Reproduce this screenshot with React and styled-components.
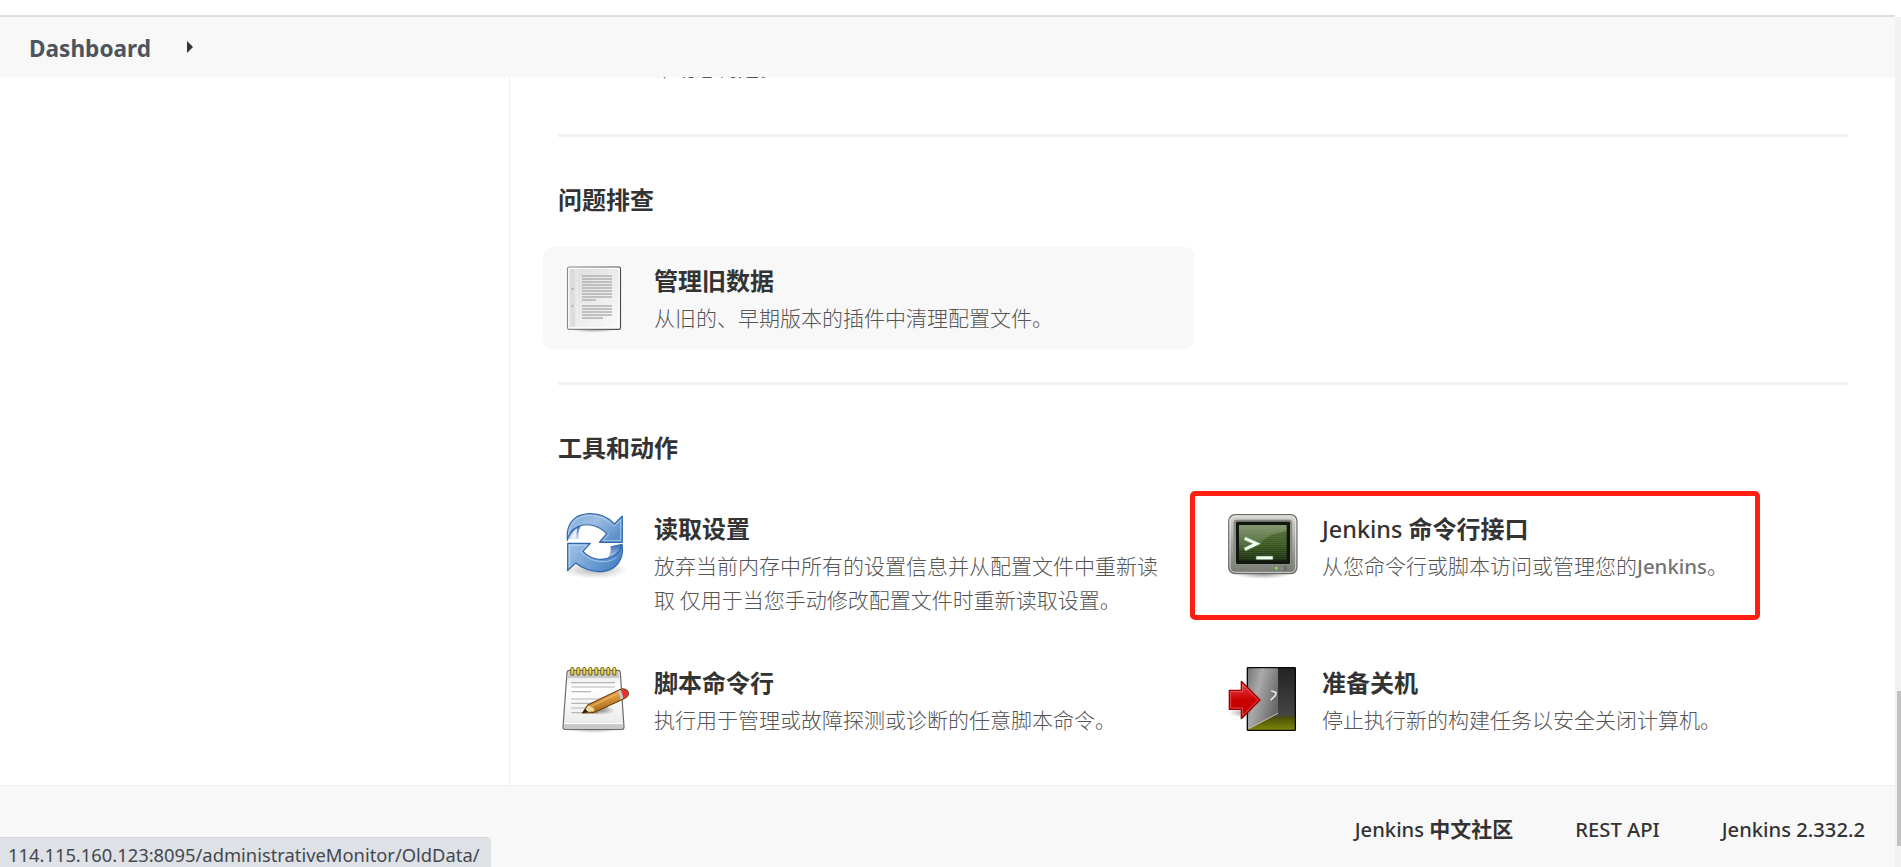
import React from "react";
import styled, { createGlobalStyle } from "styled-components";

const Global = createGlobalStyle`
  * { box-sizing: border-box; }
  html, body { margin: 0; padding: 0; background: #fff; overflow: hidden; }
  body { font-family: "Noto Sans", "Noto Sans CJK SC", sans-serif; color: #333; }
`;

const Page = styled.div`
  position: relative;
  display: flex;
  width: 1901px;
  height: 867px;
  overflow: hidden;
`;
const Body = styled.div`
  display: flex;
  flex-direction: column;
  flex: 1;
  min-width: 0;
`;
const Breadcrumbs = styled.header`
  display: flex;
  align-items: center;
  gap: 36px;
  height: 62px;
  margin-top: 15px;
  padding-left: 29px;
  background: #f8f8f8;
  border-top: 2px solid #dcdedd;
`;
const Crumb = styled.a`
  font: 700 22.6px/32px "Noto Sans", sans-serif;
  color: #4d545d;
  padding-top: 4px;
`;
const Arrow = styled.span`
  border-left: 6px solid #333;
  border-top: 6px solid transparent;
  border-bottom: 6px solid transparent;
`;
const Columns = styled.div`
  display: flex;
  height: 708px;
  overflow: hidden;
`;
const SidePanel = styled.aside`
  flex: none;
  width: 510px;
  border-right: 1px solid #efefef;
`;
const Main = styled.main`
  flex: 1;
  min-width: 0;
  padding: 0 47px 0 48px;
`;
const ClippedText = styled.p`
  margin: -27px 0 0 96px;
  height: 34px;
  font: 300 21px/34px "Noto Sans CJK SC", sans-serif;
  color: #555;
`;
const Section = styled.section`
  border-top: 3px solid #f2f2f2;
  margin-top: ${(p) => p.$top}px;
`;
const Heading = styled.h2`
  margin: 44px 0 30px;
  font: 700 24px/36px "Noto Sans CJK SC", sans-serif;
  color: #333;
`;
const Grid = styled.div`
  display: grid;
  grid-template-columns: 651px 651px;
  gap: 18px 17px;
  margin-left: -15px;
`;
const Tile = styled.a`
  display: flex;
  gap: 24px;
  padding: 15px;
  min-height: 102px;
  border-radius: 9px;
  background: ${(p) => (p.$hover ? "#f8f8f8" : "transparent")};
`;
const TileIcon = styled.svg`
  flex: none;
  width: 72px;
  height: 72px;
  overflow: visible;
`;
const TileText = styled.dl`
  margin: 0;
  flex: 1;
`;
const TileTitle = styled.dt`
  font: 700 24px/36px "Noto Sans CJK SC", sans-serif;
  height: 36px;
  color: #333;
`;
const TileDesc = styled.dd`
  margin: 2px -10px 0 0;
  width: 512px;
  font: 300 21px/34px "Noto Sans CJK SC", sans-serif;
  color: #555;
`;
const Latin = styled.span`
  font-family: "Noto Sans", sans-serif;
  font-weight: 500;
  font-size: ${(p) => p.$size}px;
  line-height: 1;
  color: ${(p) => (p.$muted ? "#737373" : "inherit")};
`;
const Footer = styled.footer`
  display: flex;
  justify-content: flex-end;
  align-items: center;
  gap: 62px;
  height: 82px;
  padding: 2px 30px 0 0;
  background: #f8f8f8;
  border-top: 1px solid #efefef;
`;
const FooterLink = styled.a`
  font: 700 21px/32px "Noto Sans CJK SC", sans-serif;
  color: #333;
  white-space: nowrap;
`;
const ScrollTrack = styled.div`
  flex: none;
  width: 6px;
  margin-top: 17px;
  padding: 674px 0 0 2px;
  background: #f1f1f1;
`;
const ScrollThumb = styled.div`
  width: 4px;
  height: 155px;
  background: #c1c1c1;
`;
const StatusBubble = styled.div`
  position: absolute;
  left: 0;
  bottom: 0;
  width: 491px;
  height: 30px;
  padding: 5px 0 0 8px;
  background: #dee1e6;
  border-top: 1px solid #d5d8dc;
  border-top-right-radius: 5px;
  font: 400 18.35px/24px "Noto Sans", sans-serif;
  color: #44484d;
  white-space: nowrap;
`;
const Highlight = styled.div`
  position: absolute;
  left: 1190px;
  top: 491px;
  width: 570px;
  height: 129px;
  border: 5px solid #ff1e12;
  border-radius: 5px;
`;

const rows = (from, to, step) => {
  const out = [];
  for (let y = from; y <= to; y += step) out.push(y);
  return out;
};

const DocumentIcon = () => (
  <TileIcon viewBox="39 36 216 216">
    <defs>
      <linearGradient id="docFill" x1="0" y1="0" x2="1" y2="1">
        <stop offset="0" stopColor="#dcdcdc" />
        <stop offset="1" stopColor="#fafafa" />
      </linearGradient>
      <linearGradient id="docEdge" x1="0" y1="0" x2="1" y2="0">
        <stop offset="0" stopColor="#8a8a8a" />
        <stop offset="1" stopColor="#4c4c4c" />
      </linearGradient>
      <radialGradient id="shade">
        <stop offset="0" stopColor="#000" stopOpacity=".45" />
        <stop offset="1" stopColor="#000" stopOpacity="0" />
      </radialGradient>
    </defs>
    <ellipse cx="147" cy="236" rx="72" ry="12" fill="url(#shade)" />
    <rect x="67.500" y="51" width="159" height="187" rx="5" fill="#fff" stroke="url(#docEdge)" strokeWidth="3.500" />
    <rect x="73" y="57" width="148" height="175" fill="url(#docFill)" />
    <rect x="76" y="60" width="15" height="170" fill="#d9d9d9" opacity=".8" />
    <path d="M93 58V232M98 58V232" stroke="#f1f1f1" strokeWidth="2" />
    <circle cx="83" cy="118" r="4" fill="#aaa" /><circle cx="84" cy="120" r="2.500" fill="#fff" />
    <circle cx="83" cy="170" r="4" fill="#aaa" /><circle cx="84" cy="172" r="2.500" fill="#fff" />
    <g stroke="#b0b0b0" strokeWidth="4.500">
      {rows(78, 141, 9).map((y) => <path key={y} d={`M111 ${y}H201`} />)}
      <path d="M111 150H153" />
      {rows(168, 195, 9).map((y) => <path key={y} d={`M111 ${y}H201`} />)}
      <path d="M111 204H174" />
    </g>
  </TileIcon>
);

const RefreshIcon = () => (
  <TileIcon viewBox="39 60 216 216">
    <defs>
      <linearGradient id="blueA" x1="0" y1="0" x2="1" y2=".6">
        <stop offset="0" stopColor="#86aedb" />
        <stop offset=".5" stopColor="#9dbde2" />
        <stop offset="1" stopColor="#5d92cd" />
      </linearGradient>
      <linearGradient id="blueB" x1="0" y1="0" x2="1" y2=".4">
        <stop offset="0" stopColor="#a5c5e8" />
        <stop offset="1" stopColor="#4c86c8" />
      </linearGradient>
      <linearGradient id="innerBlue" x1="0" y1="0" x2="0" y2="1">
        <stop offset="0" stopColor="#2862b5" />
        <stop offset="1" stopColor="#d6e4f5" />
      </linearGradient>
    </defs>
    <ellipse cx="150" cy="240" rx="98" ry="26" fill="url(#shade)" opacity=".65" />
    <path d="M100 104C125 92 160 100 178 130L164 156H188L196 170C197 190 186 205 160 210C140 212 128 198 120 186L135 160H103C96 140 96 118 100 104Z" fill="#fff" />
    <path d="M67 150C70 128 86 110 108 105C101 119 99 132 101 147H70Z" fill="url(#innerBlue)" />
    <path d="M77 146C79 132 86 121 97 115C94 126 94 136 95 146Z" fill="#e8f1fb" />
    <path d="M232 161C230 185 211 206 178 211C194 201 200 184 196 169Z" fill="url(#innerBlue)" />
    <path d="M67 151C62 96 92 73 132 71C164 70 192 84 208 102L232 78V157H163L185 131C158 103 124 99 98 110C78 119 70 135 67 151Z" fill="url(#blueA)" stroke="#3168ac" strokeWidth="3.500" strokeLinejoin="round" />
    <path d="M71 135C70 99 96 78 132 76C162 75 191 91 208 109L227 89V152H174L192 132" fill="none" stroke="#c4d9ef" strokeWidth="2.500" opacity=".8" />
    <path d="M68 160H136L114 184C135 208 174 216 203 199C220 190 228 179 231 163C239 210 212 239 176 244C145 248 112 236 92 219L68 242Z" fill="url(#blueB)" stroke="#2f65aa" strokeWidth="3.500" strokeLinejoin="round" />
    <path d="M73 166H125L107 184C136 218 186 224 215 202M73 230V166" fill="none" stroke="#cbdef2" strokeWidth="2.500" opacity=".75" />
  </TileIcon>
);

const NotepadIcon = () => (
  <TileIcon viewBox="39 42 216 216">
    <defs>
      <linearGradient id="noteFill" x1="0" y1="0" x2="0" y2="1">
        <stop offset="0" stopColor="#e2e2e2" />
        <stop offset=".3" stopColor="#fff" />
        <stop offset="1" stopColor="#e8e8e8" />
      </linearGradient>
      <linearGradient id="wood" x1="0" y1="0" x2=".4" y2="1">
        <stop offset="0" stopColor="#f2ba63" />
        <stop offset=".5" stopColor="#dd9b3d" />
        <stop offset="1" stopColor="#9f6218" />
      </linearGradient>
    </defs>
    <ellipse cx="145" cy="237" rx="84" ry="12" fill="url(#shade)" opacity=".8" />
    <path d="M72 61H219Q225 61 226 67L237 231Q237 238 231 238H60Q54 238 54 231L66 68Q67 61 72 61Z" fill="url(#noteFill)" stroke="#686868" strokeWidth="3.500" />
    <path d="M73 64H219L223 84H68Z" fill="#bcbcbc" opacity=".75" />
    <path d="M57 222H234V232Q234 235 231 235H60Q57 235 57 231Z" fill="#c8c8c8" />
    <path d="M58 221H233" stroke="#fff" strokeWidth="3" />
    <path d="M79 98H210M79 111H210M79 125H138M79 147H210M79 160H210M79 174H190M79 188H160" stroke="#b5b5b5" strokeWidth="3.500" />
    <ellipse cx="163" cy="181" rx="48" ry="14" fill="url(#shade)" />
    {[82, 100, 118, 136, 154, 172, 190, 208].map((x) => (
      <g key={x}>
        <rect x={x - 6} y="51" width="12" height="26" rx="6" fill="#76600a" />
        <rect x={x - 3.5} y="53" width="7" height="21" rx="3.500" fill="#dac43b" />
        <path d={`M${x} 56V70`} stroke="#f5e77a" strokeWidth="2" />
      </g>
    ))}
    <path d="M113 189L128 165L222 120Q240 111 249 125Q255 138 237 146L145 188Z" fill="url(#wood)" stroke="#71420e" strokeWidth="3.500" strokeLinejoin="round" />
    <path d="M115 187L129 168Q137 166 140 172Q150 174 147 184Z" fill="#ecd7a1" />
    <path d="M113 189L120 178L128 185Z" fill="#2b1a0b" stroke="#2b1a0b" strokeWidth="2" />
    <path d="M218 124L227 120Q233 130 235 144L227 149Q223 133 218 124Z" fill="#c6c6cb" />
    <path d="M227 120Q242 115 248 126Q252 137 235 145Q233 130 227 120Z" fill="#e62e36" />
    <path d="M139 169L216 132" stroke="#f8cc83" strokeWidth="3" opacity=".75" />
  </TileIcon>
);

const TerminalIcon = () => (
  <TileIcon viewBox="33 30 216 216">
    <defs>
      <linearGradient id="caseFill" x1="0" y1="0" x2="0" y2="1">
        <stop offset="0" stopColor="#d7d8d4" />
        <stop offset=".5" stopColor="#a4a69f" />
        <stop offset="1" stopColor="#777971" />
      </linearGradient>
      <linearGradient id="screenFill" x1="0" y1="0" x2="0" y2="1">
        <stop offset="0" stopColor="#5a7241" />
        <stop offset=".55" stopColor="#3b5a22" />
        <stop offset="1" stopColor="#1c2c14" />
      </linearGradient>
      <linearGradient id="glare" x1="0" y1="0" x2="0" y2="1">
        <stop offset="0" stopColor="#fff" stopOpacity=".25" />
        <stop offset="1" stopColor="#fff" stopOpacity=".05" />
      </linearGradient>
    </defs>
    <ellipse cx="144" cy="222" rx="84" ry="15" fill="url(#shade)" opacity=".85" />
    <rect x="41" y="44" width="205" height="177" rx="19" fill="url(#caseFill)" stroke="#6b6d67" strokeWidth="3.500" />
    <rect x="45" y="48" width="197" height="169" rx="16" fill="none" stroke="#efefed" strokeWidth="3" opacity=".75" />
    <rect x="57" y="60" width="173" height="136" rx="7" fill="#8e9189" stroke="#777a72" strokeWidth="2" />
    <rect x="63" y="65" width="162" height="127" rx="4" fill="#11170e" />
    <rect x="72" y="75" width="143" height="107" fill="url(#screenFill)" />
    {rows(80, 178, 6).map((y) => <path key={y} d={`M72 ${y}H215`} stroke="#95b36d" strokeWidth="1.500" opacity=".3" />)}
    <path d="M72 75H215V94C174 99 145 113 132 136L72 154Z" fill="url(#glare)" />
    <path d="M90 114L125 131L90 149" fill="none" stroke="#5dba75" strokeWidth="13" opacity=".45" />
    <path d="M89 115L125 131L89 148" fill="none" stroke="#f5fff2" strokeWidth="9" />
    <rect x="122" y="167" width="53" height="13" fill="#5dba75" opacity=".5" />
    <rect x="124" y="169" width="49" height="9" fill="#f5fff2" />
    <circle cx="184" cy="205" r="5" fill="#74bf37" /><circle cx="184" cy="204" r="2.500" fill="#c7ff8b" />
    <rect x="193" y="198" width="23" height="15" rx="7" fill="#696b64" />
    <rect x="193" y="198" width="14" height="14" rx="6" fill="#858880" />
  </TileIcon>
);

const ExitIcon = () => (
  <TileIcon viewBox="33 42 216 216">
    <defs>
      <linearGradient id="room" x1="0" y1="0" x2="0" y2="1">
        <stop offset="0" stopColor="#222" />
        <stop offset=".75" stopColor="#454545" />
        <stop offset=".8" stopColor="#4b5008" />
        <stop offset="1" stopColor="#7f8909" />
      </linearGradient>
      <linearGradient id="door" x1="0" y1="0" x2="1" y2=".5">
        <stop offset="0" stopColor="#777" />
        <stop offset=".4" stopColor="#aaa" />
        <stop offset="1" stopColor="#696969" />
      </linearGradient>
      <linearGradient id="redArrow" x1="0" y1="0" x2="0" y2="1">
        <stop offset="0" stopColor="#e3474b" />
        <stop offset=".5" stopColor="#cc0000" />
        <stop offset="1" stopColor="#bd0000" />
      </linearGradient>
    </defs>
    <rect x="97" y="53" width="144" height="188" rx="2" fill="url(#room)" stroke="#080808" strokeWidth="4" />
    <path d="M99 55H189V190L99 237Z" fill="url(#door)" />
    <path d="M101 236L189 190" stroke="#c7c7c7" strokeWidth="3" />
    <path d="M170 124L184 130L181 139L168 152" fill="none" stroke="#555" strokeWidth="9" strokeLinejoin="round" />
    <path d="M169 123L183 128L181 137L167 151" fill="none" stroke="#dedede" strokeWidth="6" strokeLinejoin="round" />
    <ellipse cx="76" cy="188" rx="34" ry="15" fill="url(#shade)" opacity=".6" />
    <path d="M43 121H79V94L135 150L79 206V178H43Z" fill="url(#redArrow)" stroke="#9c0000" strokeWidth="4" strokeLinejoin="round" />
    <path d="M47 174V125H83V104L129 150L83 196V174Z" fill="none" stroke="#f38b8b" strokeWidth="2" opacity=".8" />
  </TileIcon>
);

const Item = ({ icon, title, hover, children }) => (
  <Tile $hover={hover}>
    {icon}
    <TileText>
      <TileTitle>{title}</TileTitle>
      <TileDesc>{children}</TileDesc>
    </TileText>
  </Tile>
);

export default function App() {
  return (
    <Page>
      <Global />
      <Body>
        <Breadcrumbs>
          <Crumb>Dashboard</Crumb>
          <Arrow />
        </Breadcrumbs>
        <Columns>
          <SidePanel />
          <Main>
            <ClippedText>帮助您构建。</ClippedText>
            <Section $top={50}>
              <Heading>问题排查</Heading>
              <Grid>
                <Item hover icon={<DocumentIcon />} title="管理旧数据">
                  从旧的、早期版本的插件中清理配置文件。
                </Item>
              </Grid>
            </Section>
            <Section $top={33}>
              <Heading>工具和动作</Heading>
              <Grid>
                <Item icon={<RefreshIcon />} title="读取设置">
                  放弃当前内存中所有的设置信息并从配置文件中重新读取 仅用于当您手动修改配置文件时重新读取设置。
                </Item>
                <Item
                  icon={<TerminalIcon />}
                  title={<><Latin $size={23.4}>Jenkins </Latin>命令行接口</>}
                >
                  从您命令行或脚本访问或管理您的<Latin $size={20.4} $muted>Jenkins</Latin>。
                </Item>
                <Item icon={<NotepadIcon />} title="脚本命令行">
                  执行用于管理或故障探测或诊断的任意脚本命令。
                </Item>
                <Item icon={<ExitIcon />} title="准备关机">
                  停止执行新的构建任务以安全关闭计算机。
                </Item>
              </Grid>
            </Section>
          </Main>
        </Columns>
        <Footer>
          <FooterLink><Latin $size={20.2}>Jenkins </Latin>中文社区</FooterLink>
          <FooterLink><Latin $size={20.2}>REST API</Latin></FooterLink>
          <FooterLink><Latin $size={20.2}>Jenkins 2.332.2</Latin></FooterLink>
        </Footer>
      </Body>
      <ScrollTrack><ScrollThumb /></ScrollTrack>
      <Highlight />
      <StatusBubble>114.115.160.123:8095/administrativeMonitor/OldData/</StatusBubble>
    </Page>
  );
}
